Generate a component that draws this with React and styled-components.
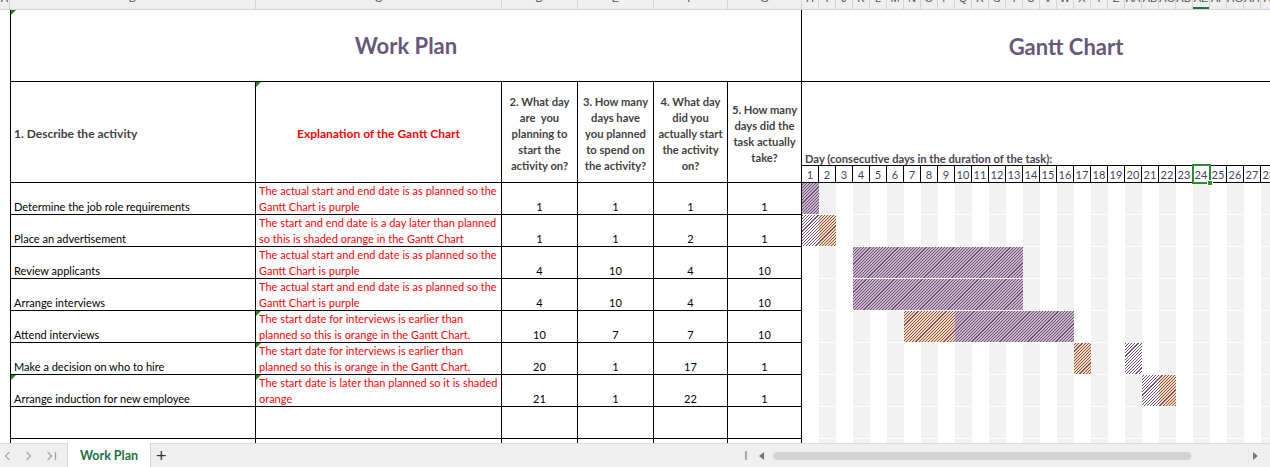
import styled, { createGlobalStyle, css } from "styled-components";

const GlobalStyle = createGlobalStyle`
  html, body {
    margin: 0;
    padding: 0;
    background: #fff;
    overflow: hidden;
  }
`;

const DAY_W = 17;
const DAY_COUNT = 28;
const SELECTED_DAY = 24;

const PLAN_COLS = [
  { l: "A", w: 10 },
  { l: "B", w: 246 },
  { l: "C", w: 246 },
  { l: "D", w: 76 },
  { l: "E", w: 76 },
  { l: "F", w: 74 },
  { l: "G", w: 74 },
];

const DAY_LETTERS = [
  "H", "I", "J", "K", "L", "M", "N", "O", "P", "Q", "R", "S", "T", "U", "V",
  "W", "X", "Y", "Z", "AA", "AB", "AC", "AD", "AE", "AF", "AG", "AH", "AI",
];

const HEADERS = [
  ["2. What day", "are  you", "planning to", "start the", "activity on?"],
  ["3. How many", "days have", "you planned", "to spend on", "the activity?"],
  ["4. What day", "did you", "actually start", "the activity", "on?"],
  ["5. How many", "days did the", "task actually", "take?"],
];

const PURPLE_NOTE = ["The actual start and end date is as planned so the", "Gantt Chart is purple"];
const EARLY_NOTE = ["The start date for interviews is earlier than", "planned so this is orange in the Gantt Chart."];

const tasks = [
  { name: "Determine the job role requirements", note: PURPLE_NOTE, plan: 1, planDays: 1, start: 1, days: 1 },
  { name: "Place an advertisement", note: ["The start and end date is a day later than planned", "so this is shaded orange in the Gantt Chart"], plan: 1, planDays: 1, start: 2, days: 1 },
  { name: "Review applicants", note: PURPLE_NOTE, plan: 4, planDays: 10, start: 4, days: 10 },
  { name: "Arrange interviews", note: PURPLE_NOTE, plan: 4, planDays: 10, start: 4, days: 10 },
  { name: "Attend interviews", note: EARLY_NOTE, plan: 10, planDays: 7, start: 7, days: 10, flagNote: true },
  { name: "Make a decision on who to hire", note: EARLY_NOTE, plan: 20, planDays: 1, start: 17, days: 1, flagNote: true },
  { name: "Arrange induction for new employee", note: ["The start date is later than planned so it is shaded", "orange"], plan: 21, planDays: 1, start: 22, days: 1, flagNote: true, flagName: true },
];

const EMPTY_ROWS = 2;

function kindFor(task, day) {
  if (!task) return "none";
  const planned = day >= task.plan && day < task.plan + task.planDays;
  const actual = day >= task.start && day < task.start + task.days;
  if (planned && actual) return "both";
  if (planned) return "plan";
  if (actual) return "actual";
  return "none";
}

const hatch = (bg) => css`
  background-color: ${bg};
  background-image: repeating-linear-gradient(135deg, #6e5175 0 0.8px, transparent 0.8px 2.2px);
  background-attachment: fixed;
`;

export default function App() {
  const days = Array.from({ length: DAY_COUNT }, (_, i) => i + 1);
  const ganttRows = [...tasks, ...Array(EMPTY_ROWS).fill(null)];

  return (
    <Sheet>
      <GlobalStyle />
      <ColumnStrip>
        {PLAN_COLS.map((c) => (
          <ColLetter key={c.l} $w={c.w}><span>{c.l}</span></ColLetter>
        ))}
        {DAY_LETTERS.map((l, i) => (
          <ColLetter key={l} $w={DAY_W} $active={i + 1 === SELECTED_DAY}><span>{l}</span></ColLetter>
        ))}
      </ColumnStrip>

      <Workspace>
        <PlanGrid>
          <Gutter />
          <TitleCell $flag>Work Plan</TitleCell>

          <Gutter />
          <LabelCell>1. Describe the activity</LabelCell>
          <ExplainCell $flag>Explanation of the Gantt Chart</ExplainCell>
          {HEADERS.map((lines, i) => (
            <QuestionCell key={i}>
              <div>{lines.map((l) => <div key={l}>{l}</div>)}</div>
            </QuestionCell>
          ))}

          {tasks.map((t) => (
            <Row key={t.name} task={t} />
          ))}
          {Array.from({ length: EMPTY_ROWS }, (_, i) => (
            <Row key={"empty" + i} />
          ))}
        </PlanGrid>

        <Gantt>
          <GanttTitle>Gantt Chart</GanttTitle>
          <GanttHead>
            <DayCaption>Day (consecutive days in the duration of the task):</DayCaption>
            <DayNumbers>
              {days.map((d) => (
                <DayNum key={d} $selected={d === SELECTED_DAY}>{d}</DayNum>
              ))}
            </DayNumbers>
          </GanttHead>
          {ganttRows.map((t, r) => (
            <GanttRow key={r}>
              {days.map((d) => (
                <GanttCell key={d} $kind={kindFor(t, d)} $even={d % 2 === 0} />
              ))}
            </GanttRow>
          ))}
        </Gantt>
      </Workspace>

      <TabBar>
        <TabNav>
          <svg width="7" height="10" viewBox="0 0 7 10">
            <polyline points="5.5,1 1.5,5 5.5,9" fill="none" stroke="#a8a8a8" strokeWidth="1.3" />
          </svg>
          <svg width="7" height="10" viewBox="0 0 7 10">
            <polyline points="1.5,1 5.5,5 1.5,9" fill="none" stroke="#a8a8a8" strokeWidth="1.3" />
          </svg>
          <svg width="11" height="10" viewBox="0 0 11 10">
            <polyline points="1.5,1 5.5,5 1.5,9" fill="none" stroke="#a8a8a8" strokeWidth="1.3" />
            <line x1="9.5" y1="1" x2="9.5" y2="9" stroke="#a8a8a8" strokeWidth="1.3" />
          </svg>
        </TabNav>
        <SheetTab>Work Plan</SheetTab>
        <AddSheet>+</AddSheet>
        <Scroller>
          <Splitter />
          <svg width="5" height="8" viewBox="0 0 5 8">
            <polygon points="5,0 0,4 5,8" fill="#777" />
          </svg>
          <Thumb />
          <svg width="5" height="8" viewBox="0 0 5 8">
            <polygon points="0,0 5,4 0,8" fill="#777" />
          </svg>
        </Scroller>
      </TabBar>
    </Sheet>
  );
}

function Row({ task }) {
  return (
    <>
      <Gutter />
      <ActivityCell $flag={task?.flagName}>{task?.name}</ActivityCell>
      <NoteCell $flag={task?.flagNote}>
        {task && <NoteLines>{task.note.map((l) => <div key={l}>{l}</div>)}</NoteLines>}
      </NoteCell>
      <NumberCell>{task?.plan}</NumberCell>
      <NumberCell>{task?.planDays}</NumberCell>
      <NumberCell>{task?.start}</NumberCell>
      <NumberCell>{task?.days}</NumberCell>
    </>
  );
}

const Sheet = styled.div`
  width: 1270px;
  height: 467px;
  display: flex;
  flex-direction: column;
  overflow: hidden;
  font-family: "Lato", "Liberation Sans", sans-serif;
  color: #000;
`;

const ColumnStrip = styled.div`
  flex: none;
  display: flex;
  height: 10px;
  box-sizing: border-box;
  background: #efefef;
  border-bottom: 1px solid #d2d2d2;
  overflow: hidden;
`;

const ColLetter = styled.div`
  flex: none;
  width: ${(p) => p.$w}px;
  box-sizing: border-box;
  border-right: 1px solid #d4d4d4;
  text-align: center;
  font: 11px/11px "Liberation Sans", sans-serif;
  color: ${(p) => (p.$active ? "#217346" : "#555")};
  box-shadow: ${(p) => (p.$active ? "inset 0 -2px 0 #217346" : "none")};
  overflow: hidden;
  white-space: nowrap;

  span {
    display: block;
    margin-top: -7px;
  }
`;

const Workspace = styled.div`
  flex: 1;
  min-height: 0;
  display: flex;
  overflow: hidden;
`;

const PlanGrid = styled.div`
  flex: none;
  display: grid;
  grid-template-columns: ${PLAN_COLS.map((c) => c.w + "px").join(" ")};
  grid-template-rows: 72px 101px;
  grid-auto-rows: 32px;
`;

const Gutter = styled.div``;

const BaseCell = styled.div`
  position: relative;
  box-sizing: border-box;
  border-right: 1px solid #000;
  border-bottom: 1px solid #000;
  display: flex;
  padding: 0 3px;
  overflow: hidden;
  white-space: nowrap;
  font-size: 11px;
  line-height: 16px;

  ${(p) =>
    p.$flag &&
    css`
      &::before {
        content: "";
        position: absolute;
        top: 0;
        left: 0;
        border-top: 5px solid #1f8a1f;
        border-right: 5px solid transparent;
      }
    `}
`;

const TitleCell = styled(BaseCell)`
  grid-column: span 6;
  border-left: 1px solid #000;
  align-items: center;
  justify-content: center;
  padding-top: 1px;
  font-size: 22px;
  font-weight: 700;
  color: #66587a;
`;

const LabelCell = styled(BaseCell)`
  border-left: 1px solid #000;
  align-items: center;
  padding-top: 4px;
  font-size: 12px;
  font-weight: 700;
  color: #3f3f3f;
`;

const ExplainCell = styled(BaseCell)`
  align-items: center;
  justify-content: center;
  padding-top: 4px;
  font-size: 12px;
  font-weight: 700;
  color: #ff0000;
`;

const QuestionCell = styled(BaseCell)`
  align-items: center;
  justify-content: center;
  text-align: center;
  white-space: pre;
  padding: 4px 1px 0;
  font-size: 11.2px;
  font-weight: 700;
  color: #3f3f3f;
`;

const ActivityCell = styled(BaseCell)`
  border-left: 1px solid #000;
  align-items: flex-end;
  line-height: 14px;
`;

const NoteCell = styled(BaseCell)`
  align-items: flex-end;
  color: #ff0000;
`;

const NoteLines = styled.div`
  margin-bottom: -1px;
`;

const NumberCell = styled(BaseCell)`
  align-items: flex-end;
  justify-content: center;
  line-height: 14px;
`;

const Gantt = styled.div`
  flex: 1;
  min-width: 0;
  display: flex;
  flex-direction: column;
  overflow: hidden;
`;

const GanttTitle = styled.div`
  flex: none;
  width: 528px;
  height: 72px;
  box-sizing: border-box;
  border-bottom: 1px solid #000;
  padding-top: 1px;
  display: flex;
  align-items: center;
  justify-content: center;
  font-size: 22px;
  font-weight: 700;
  color: #66587a;
`;

const GanttHead = styled.div`
  flex: none;
  height: 101px;
  display: flex;
  flex-direction: column;
  justify-content: flex-end;
`;

const DayCaption = styled.div`
  padding-left: 3px;
  font-size: 11.2px;
  font-weight: 700;
  line-height: 11px;
  margin-bottom: 1px;
  color: #4a4250;
  white-space: nowrap;
`;

const DayNumbers = styled.div`
  display: flex;
  height: 18px;
  box-sizing: border-box;
  border-top: 1px solid #000;
  border-bottom: 1px solid #000;
`;

const DayNum = styled.div`
  position: relative;
  flex: none;
  width: ${DAY_W}px;
  box-sizing: border-box;
  border-right: 1px solid #000;
  text-align: center;
  font-size: 11px;
  line-height: 17px;
  color: #3c4563;

  ${(p) =>
    p.$selected &&
    css`
      &::after {
        content: "";
        position: absolute;
        left: -1px;
        top: -2px;
        right: -2px;
        bottom: -2px;
        border: 2px solid #2f8a34;
        z-index: 2;
      }
      &::before {
        content: "";
        position: absolute;
        right: -4px;
        bottom: -4px;
        width: 4px;
        height: 4px;
        background: #2f8a34;
        border: 1px solid #fff;
        z-index: 3;
      }
    `}
`;

const GanttRow = styled.div`
  flex: none;
  display: flex;
  height: 32px;
  box-sizing: border-box;
  border-bottom: 1px solid #fff;
`;

const GanttCell = styled.div`
  flex: none;
  width: ${DAY_W}px;
  background: ${(p) => (p.$even ? "#f2f2f2" : "#fff")};

  ${(p) => p.$kind === "both" && hatch("#c9b4cc")}
  ${(p) => p.$kind === "plan" && hatch("#fff")}
  ${(p) => p.$kind === "actual" && hatch("#fdd9a8")}
`;

const TabBar = styled.div`
  flex: none;
  height: 24px;
  box-sizing: border-box;
  display: flex;
  align-items: stretch;
  background: #efefef;
  border-top: 1px solid #dadada;
`;

const TabNav = styled.div`
  width: 67px;
  display: flex;
  align-items: center;
  gap: 14px;
  padding-left: 4px;
  box-sizing: border-box;
`;

const SheetTab = styled.div`
  width: 84px;
  margin-top: -1px;
  display: flex;
  align-items: center;
  justify-content: center;
  background: #fff;
  border-left: 1px solid #d4d4d4;
  border-right: 1px solid #d4d4d4;
  box-sizing: border-box;
  font-size: 12.5px;
  font-weight: 700;
  color: #1d6f42;
`;

const AddSheet = styled.div`
  display: flex;
  align-items: center;
  padding-left: 5px;
  font: 18px/1 "Liberation Sans", sans-serif;
  color: #333;
`;

const Scroller = styled.div`
  margin-left: auto;
  width: 526px;
  display: flex;
  align-items: center;
  padding: 0 12px 0 1px;
  box-sizing: border-box;
`;

const Splitter = styled.div`
  width: 2px;
  height: 9px;
  background: #a9a9a9;
  margin-right: 12px;
`;

const Thumb = styled.div`
  width: 418px;
  height: 8px;
  margin-left: 9px;
  margin-right: auto;
  border-radius: 4px;
  background: #d3d3d3;
`;
